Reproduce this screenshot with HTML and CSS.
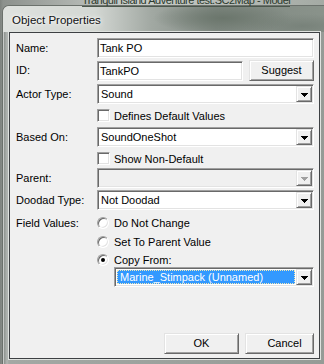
FILE: index.html
```html
<!DOCTYPE html>
<html>

<head>
  <meta charset="utf-8">

  <title>Object Properties</title>

  <link rel="stylesheet" href="styles.css">
</head>

<body>
  <div class="behind">Tranquil Island Adventure test.SC2Map - Model</div>

  <div class="window">
    <div class="titlebar">Object Properties</div>

    <div class="client">
      <div class="row row-name">
        <span class="lbl">Name:</span>
        <div class="edit grow">Tank PO</div>
      </div>

      <div class="row row-id">
        <span class="lbl">ID:</span>
        <div class="edit edit-id">TankPO</div>
        <div class="btn btn-suggest">Suggest</div>
      </div>

      <div class="row row-actor">
        <span class="lbl">Actor Type:</span>
        <div class="combo grow">
          <span class="value">Sound</span>
          <span class="drop"><svg width="7" height="4" viewBox="0 0 7 4"><path d="M0 0h7v1H0zM1 1h5v1H1zM2 2h3v1H2zM3 3h1v1H3z" fill="#000"/></svg></span>
        </div>
      </div>

      <div class="row row-check1">
        <span class="lbl"></span>
        <span class="check"></span>
        <span class="opt">Defines Default Values</span>
      </div>

      <div class="row row-based">
        <span class="lbl">Based On:</span>
        <div class="combo grow">
          <span class="value">SoundOneShot</span>
          <span class="drop"><svg width="7" height="4" viewBox="0 0 7 4"><path d="M0 0h7v1H0zM1 1h5v1H1zM2 2h3v1H2zM3 3h1v1H3z" fill="#000"/></svg></span>
        </div>
      </div>

      <div class="row row-check2">
        <span class="lbl"></span>
        <span class="check"></span>
        <span class="opt">Show Non-Default</span>
      </div>

      <div class="row row-parent">
        <span class="lbl">Parent:</span>
        <div class="combo grow disabled">
          <span class="value"></span>
          <span class="drop"><svg width="7" height="4" viewBox="0 0 7 4"><path d="M0 0h7v1H0zM1 1h5v1H1zM2 2h3v1H2zM3 3h1v1H3z" fill="#a0a0a0"/></svg></span>
        </div>
      </div>

      <div class="row row-doodad">
        <span class="lbl">Doodad Type:</span>
        <div class="combo grow">
          <span class="value">Not Doodad</span>
          <span class="drop"><svg width="7" height="4" viewBox="0 0 7 4"><path d="M0 0h7v1H0zM1 1h5v1H1zM2 2h3v1H2zM3 3h1v1H3z" fill="#000"/></svg></span>
        </div>
      </div>

      <div class="row row-radio1">
        <span class="lbl">Field Values:</span>
        <span class="radio"></span>
        <span class="opt">Do Not Change</span>
      </div>

      <div class="row row-radio2">
        <span class="lbl"></span>
        <span class="radio"></span>
        <span class="opt">Set To Parent Value</span>
      </div>

      <div class="row row-radio3">
        <span class="lbl"></span>
        <span class="radio on"></span>
        <span class="opt">Copy From:</span>
      </div>

      <div class="row row-copy">
        <div class="combo grow">
          <span class="value"><span class="picked">Marine_Stimpack (Unnamed)</span></span>
          <span class="drop"><svg width="7" height="4" viewBox="0 0 7 4"><path d="M0 0h7v1H0zM1 1h5v1H1zM2 2h3v1H2zM3 3h1v1H3z" fill="#000"/></svg></span>
        </div>
      </div>

      <div class="row row-buttons">
        <div class="btn btn-ok">OK</div>
        <div class="btn btn-cancel">Cancel</div>
      </div>
    </div>
  </div>
</body>

</html>
```

FILE: styles.css
```css
* {
  box-sizing: border-box;
}

html,
body {
  margin: 0;
}

body {
  position: relative;
  width: 324px;
  height: 364px;
  overflow: hidden;
  background: linear-gradient(90deg, #7d827e 0, #8c918d 3px, #c9cdc9 40%, #a4aaa4 100%);
  font-family: "Liberation Sans", Arial, sans-serif;
  font-size: 11px;
  color: #000;
}

/* text of the window behind the dialog */
.behind {
  position: absolute;
  left: 82px;
  top: -6px;
  font-size: 11px;
  line-height: 12px;
  color: #2c3a2e;
  letter-spacing: -0.5px;
  border-bottom: 1px solid #4b574c;
}

.window {
  width: 330px;
  height: 359px;
  margin: 5px 0 0 2px;
  padding: 0 6px;
  border: 1px solid #6b716c;
  border-bottom: 0;
  border-radius: 7px 7px 0 0;
  background: linear-gradient(90deg, #7f8580 0, #b2b6b3 4px, #a3a8a4 6px, #959b96 100%);
  box-shadow: inset 1px 1px 0 rgba(255, 255, 255, 0.55);
}

.titlebar {
  height: 26px;
  margin: 0 -6px;
  padding: 8px 0 0 9px;
  border-radius: 6px 6px 0 0;
  background:
    radial-gradient(ellipse 70px 16px at 220px 12px, #6b766c, transparent),
    radial-gradient(ellipse 60px 12px at 300px 20px, #78827a, transparent),
    linear-gradient(90deg, #dfe2df 0, #d3d7d3 28%, #a2a9a3 45%, #808982 65%, #8a938b 100%);
  font-size: 11.5px;
  line-height: 13px;
  color: #111;
  text-shadow: 0 0 6px #fff, 0 0 3px #fff;
}

.client {
  width: 311px;
  height: 327px;
  padding: 5px 5px 0 6px;
  background: #f0f0f0;
  border: 1px solid #3d4043;
  box-shadow: 0 0 0 1px #dfe2df;
}

.row {
  display: flex;
  align-items: center;
}

.lbl {
  flex: none;
  width: 81px;
}

.grow {
  flex: 1;
}

.row-name { height: 20px; }
.row-id { height: 21px; margin-top: 2px; align-items: flex-start; }
.row-actor { height: 20px; margin-top: 3px; }
.row-check1 { height: 13px; margin-top: 5px; }
.row-based { height: 20px; margin-top: 5px; }
.row-check2 { height: 13px; margin-top: 5px; }
.row-parent { height: 20px; margin-top: 3px; }
.row-doodad { height: 20px; margin-top: 2px; }
.row-radio1 { height: 13px; margin-top: 6px; }
.row-radio2 { height: 13px; margin-top: 6px; }
.row-radio3 { height: 13px; margin-top: 5px; }
.row-copy { height: 20px; margin-top: 1px; padding-left: 98px; }
.row-buttons { height: 21px; margin-top: 46px; justify-content: flex-end; gap: 6px; }

.row-id .lbl {
  line-height: 21px;
}

/* sunken edit and combo boxes */
.edit,
.combo {
  height: 20px;
  background: #fff;
  border: 1px solid;
  border-color: #a0a0a0 #fff #fff #a0a0a0;
  box-shadow: inset 1px 1px 0 #696969, inset -1px -1px 0 #e3e3e3;
}

.edit {
  padding: 0 2px;
  line-height: 18px;
}

.edit-id {
  width: 146px;
  margin-top: 1px;
}

.combo {
  display: flex;
  padding: 1px;
}

.combo .value {
  flex: 1;
  padding-left: 2px;
  line-height: 16px;
}

.combo.disabled {
  background: #f0f0f0;
}

.drop {
  flex: none;
  width: 16px;
  height: 16px;
  display: flex;
  align-items: center;
  justify-content: center;
  padding-top: 1px;
  background: #f0f0f0;
  border: 1px solid;
  border-color: #e3e3e3 #696969 #696969 #e3e3e3;
  box-shadow: inset 1px 1px 0 #fff, inset -1px -1px 0 #a0a0a0;
}

.picked {
  display: block;
  margin: 1px 1px 1px -1px;
  padding-left: 2px;
  line-height: 12px;
  height: 14px;
  background: #3399ff;
  color: #fff;
  border: 1px dotted #f3e9b5;
}

.check,
.radio {
  flex: none;
  width: 13px;
  height: 13px;
  margin-right: 4px;
  background: #fff;
  border: 1px solid;
  border-color: #a0a0a0 #fff #fff #a0a0a0;
  box-shadow: inset 1px 1px 0 #696969, inset -1px -1px 0 #e3e3e3;
}

.radio {
  width: 12px;
  height: 12px;
  margin-right: 5px;
  border-radius: 50%;
  display: flex;
  align-items: center;
  justify-content: center;
}

.radio.on::after {
  content: "";
  width: 4px;
  height: 4px;
  border-radius: 50%;
  background: #000;
}

/* raised buttons */
.btn {
  height: 21px;
  line-height: 19px;
  text-align: center;
  background: #f0f0f0;
  border: 1px solid;
  border-color: #e3e3e3 #696969 #696969 #e3e3e3;
  box-shadow: inset 1px 1px 0 #fff, inset -1px -1px 0 #a0a0a0;
}

.btn-suggest {
  width: 65px;
  margin-left: 6px;
}

.btn-ok {
  width: 75px;
}

.btn-cancel {
  width: 69px;
  padding-left: 10px;
}
```
